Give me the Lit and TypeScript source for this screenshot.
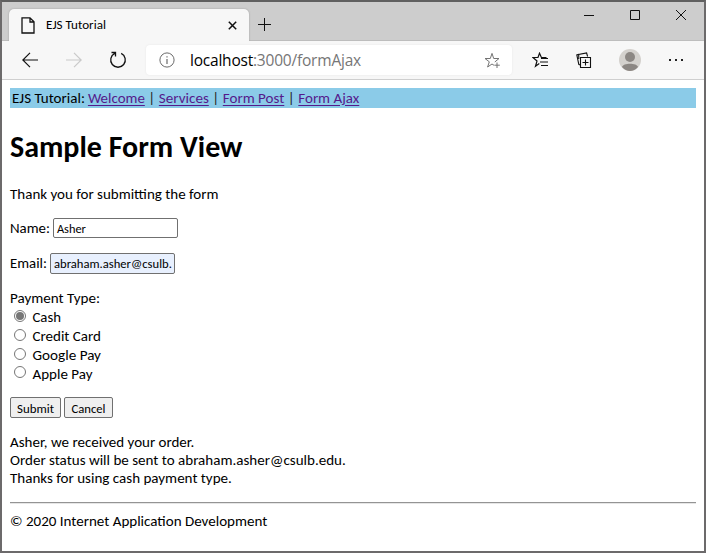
import { LitElement, html, css } from "lit";
import { customElement, property } from "lit/decorators.js";

/** A run of text that fills a given width, by its size or (with track) by its letter spacing. */
@customElement("fit-text")
class FitText extends LitElement {
  @property({ type: Number }) w = 0;
  @property() text = "";
  @property({ type: Boolean }) track = false;
  static styles = css`
    :host { display: inline-block; white-space: pre; text-decoration: inherit; }
    span { display: inline-block; text-decoration: inherit; text-underline-offset: inherit; }
  `;
  render() {
    return html`<span>${this.text}</span>`;
  }
  updated() {
    const el = this.renderRoot.querySelector("span") as HTMLElement;
    const natural = el.getBoundingClientRect().width;
    if (this.track) {
      el.style.letterSpacing = ((this.w - natural) / this.text.length).toFixed(3) + "px";
    } else {
      const size = parseFloat(getComputedStyle(el).fontSize);
      el.style.fontSize = ((size * this.w) / natural).toFixed(3) + "px";
    }
  }
}

const t = (text: string, w: number, track = false) =>
  html`<fit-text .text=${text} .w=${w} .track=${track}></fit-text>`;

@customElement("app-root")
class AppRoot extends LitElement {
  static styles = css`
    :host { display: block; height: 553px; }
    * { box-sizing: border-box; }
    .window { height: 553px; border: 2px solid #6c6a6b; border-top-color: #606060; background: #fff; overflow: hidden;
      font: 15px/18px Carlito, Calibri, Lato, sans-serif; color: #000; }
    svg { display: block; fill: none; stroke: #111; flex: none; }
    .titlebar { height: 39px; background: #cdcdcd; display: flex; align-items: flex-end; padding-left: 7px; border-bottom: 1px solid #bdbdbd; }
    .tab { height: 32px; width: 240px; margin-bottom: -1px; background: #f7f7f7; border-radius: 5px 5px 0 0; box-shadow: 0 0 2px #999; clip-path: inset(-3px -3px 0 -3px);
      display: flex; align-items: center; padding: 0 12px 0 12px; font-size: 13px; }
    .tab svg.x { margin-left: auto; }
    .tab fit-text { margin-left: 11px; }
    .plus { margin: 0 0 9px 9px; }
    .controls { margin-left: auto; align-self: flex-start; display: flex; gap: 34px; padding: 7px 17px 0 0; }
    .toolbar { height: 39px; background: #f7f7f7; border-bottom: 1px solid #cfcfcf; display: flex; align-items: center; padding-left: 20px; }
    .toolbar .fwd { margin-left: 28px; }
    .toolbar .reload { margin-left: 27px; }
    .address { margin-left: 19px; width: 366px; height: 30px; background: #fff; border-radius: 4px; box-shadow: 0 0 2px #e4e4e4;
      display: flex; align-items: center; padding: 0 11px 0 13px; font: 15.5px/22px "Segoe UI", "Open Sans", sans-serif; }
    .address .host { margin-left: 15px; }
    .path { color: #767676; }
    .address .star { margin-left: auto; }
    .fav { margin-left: 20px; }
    .coll { margin-left: 27px; }
    .avatar { margin-left: 27px; }
    .dots { margin-left: 27px; }
    .page { padding: 8px 8px 0; }
    .nav { height: 20px; background: #8bcbe8; padding: 1px 0 0 2px; display: flex; }
    .nav a { color: #551a8b; text-decoration: underline; text-underline-offset: 2px; }
    .nav i { font-style: normal; width: 14px; text-align: center; color: #222; }
    .nav a:first-of-type { margin-left: 3px; }
    h1 { margin: 21px 0 0; font-size: 30px; line-height: 36px; height: 36px; font-weight: 700; }
    .thanks { margin-top: 20px; height: 18px; }
    .field { display: flex; align-items: center; gap: 3px; height: 21px; }
    .name { margin-top: 14px; }
    .email { margin-top: 15px; }
    .email > fit-text { margin-bottom: 2px; }
    .input { width: 125px; height: 20px; border: 1px solid #707070; border-radius: 2px; padding: 2px 0 0 3px; font-size: 12.5px; line-height: 16px; overflow: hidden; }
    .email .input { background: #e8f0fe; height: 21px; padding-top: 2px; }
    .type { margin-top: 15px; height: 18px; }
    .option { height: 19px; display: flex; align-items: center; padding-left: 4px; }
    .option fit-text { margin-left: 6.5px; }
    .radio { width: 12px; height: 12px; border: 1px solid #767676; border-radius: 50%; margin-bottom: 2px; display: flex; align-items: center; justify-content: center; }
    .radio.on::after { content: ""; width: 8px; height: 8px; border-radius: 50%; background: #767676; }
    .radio.last { margin-bottom: 4px; }
    .buttons { display: flex; gap: 3px; margin-top: 14px; }
    button { height: 21px; padding: 1px 0 0; border: 1px solid #707070; border-radius: 2px; background: #efefef; font: 12.5px/17px Carlito, Calibri, Lato, sans-serif; color: #000; }
    .submit { width: 51px; }
    .cancel { width: 49px; }
    .result { margin-top: 15px; }
    .result div, .footer { height: 18px; }
    hr { margin: 15px 0 0; border: 0; height: 2px; border-top: 1px solid #949494; border-bottom: 1px solid #e6e6e6; }
    .footer { margin-top: 8px; }
  `;

  private option(label: string, w: number, state = "") {
    return html`<div class="option"><span class="radio ${state}"></span>${t(label, w)}</div>`;
  }

  render() {
    return html`<div class="window">
      <div class="titlebar">
        <div class="tab">
          <svg width="14" height="17" viewBox="0 0 14 17" stroke-width="1.3"><path d="M1 .8H9L13 4.8V16H1ZM9 .8V5H13"/></svg>
          ${t("EJS Tutorial", 60)}
          <svg class="x" width="9" height="9" viewBox="0 0 9 9" stroke-width="1.5"><path d="M.8.8L8.2 8.2M8.2.8L.8 8.2"/></svg>
        </div>
        <svg class="plus" width="13" height="13" viewBox="0 0 13 13" stroke="#222"><path d="M6.5 0V13M0 6.5H13"/></svg>
        <div class="controls">
          <svg width="12" height="12" viewBox="0 0 12 12"><path d="M1 6.5H11"/></svg>
          <svg width="12" height="12" viewBox="0 0 12 12"><path d="M1.5 1.5H10.5V10.5H1.5Z"/></svg>
          <svg width="12" height="12" viewBox="0 0 12 12"><path d="M1 1L11 11M11 1L1 11"/></svg>
        </div>
      </div>
      <div class="toolbar">
        <svg width="16" height="16" viewBox="0 0 16 16" stroke-width="1.2"><path d="M16 8H1M8 .8L.8 8L8 15.2"/></svg>
        <svg class="fwd" width="16" height="16" viewBox="0 0 16 16" stroke-width="1.2"><g stroke="#c9c9c9"><path d="M0 8H15M8 .8L15.2 8L8 15.2"/></g></svg>
        <svg class="reload" width="18" height="18" viewBox="0 0 18 18" stroke-width="1.3"><path d="M12.2 2.4A7.3 7.3 0 1 1 5.8 2.4M2.5 1.5H6.5V5.5"/></svg>
        <div class="address">
          <svg width="16" height="16" viewBox="0 0 16 16"><g stroke="#6b6b6b"><circle cx="8" cy="8" r="7.1"/><path d="M8 7V12M8 4.2V5.5" stroke-width="1.2"/></g></svg>
          <span class="host">${t("localhost", 63, true)}</span><span class="path">${t(":3000/formAjax", 108, true)}</span>
          <svg class="star" width="17" height="17" viewBox="0 0 17 17"><g stroke="#737373"><path d="M10.8 10L15 6.5H9.7L8 1.4L6.3 6.5H1L5.3 9.8L3.6 15L8 12L10 13.3"/><path d="M13 10.5V16M10.3 13.2H15.8"/></g></svg>
        </div>
        <svg class="fav" width="17" height="16" viewBox="0 0 17 16" stroke-width="1.2"><path d="M14.5 5.5H9.4L7.5 1.2L6 5.5H1L5 9L3.5 14.3L7.3 11.5M9 6.5H16M8 10H16M9 13.5H16"/></svg>
        <svg class="coll" width="16" height="16" viewBox="0 0 16 16" stroke-width="1.1"><path d="M4.5 5.5H14.5V15.5H4.5ZM9.5 7.5V13.5M6.5 10.5H12.5M3.8 13L2.8 12.3L.8 2.9L2.8 2.4M2.8 7L2.7 2.4L10.6 1L11.6 4.5"/></svg>
        <svg class="avatar" width="22" height="22" viewBox="0 0 22 22"><g stroke="none"><circle cx="11" cy="11" r="11" fill="#d4d1cd"/><circle cx="11" cy="8" r="5" fill="#8c8783"/><path d="M3 18C4 13.5 18 13.5 19 18Q15.5 22 11 22Q6.5 22 3 18Z" fill="#8c8783"/></g></svg>
        <svg class="dots" width="16" height="4" viewBox="0 0 16 4"><path fill="#222" stroke="none" d="M1 1H3V3H1ZM7 1H9V3H7ZM13 1H15V3H13Z"/></svg>
      </div>
      <div class="page">
        <div class="nav">${t("EJS Tutorial:", 73)}<a>${t("Welcome", 57)}</a><i>|</i><a>${t("Services", 50)}</a><i>|</i><a>${t("Form Post", 61.5)}</a><i>|</i><a>${t("Form Ajax", 61)}</a></div>
        <h1>${t("Sample Form View", 232.5)}</h1>
        <div class="thanks">${t("Thank you for submitting the form", 208.5)}</div>
        <div class="field name">${t("Name:", 40)}<div class="input">${t("Asher", 29)}</div></div>
        <div class="field email">${t("Email:", 37)}<div class="input">${t("abraham.asher@csulb.", 118)}</div></div>
        <div class="type">${t("Payment Type:", 90)}</div>
        ${this.option("Cash", 28.5, "on")}
        ${this.option("Credit Card", 68.5)}
        ${this.option("Google Pay", 68.5)}
        ${this.option("Apple Pay", 60, "last")}
        <div class="buttons"><button class="submit">${t("Submit", 37)}</button><button class="cancel">${t("Cancel", 34)}</button></div>
        <div class="result">
          <div>${t("Asher, we received your order.", 184.5)}</div>
          <div>${t("Order status will be sent to abraham.asher@csulb.edu.", 336)}</div>
          <div>${t("Thanks for using cash payment type.", 222)}</div>
        </div>
        <hr />
        <div class="footer">${t("© 2020 Internet Application Development", 257.5)}</div>
      </div>
    </div>`;
  }
}
